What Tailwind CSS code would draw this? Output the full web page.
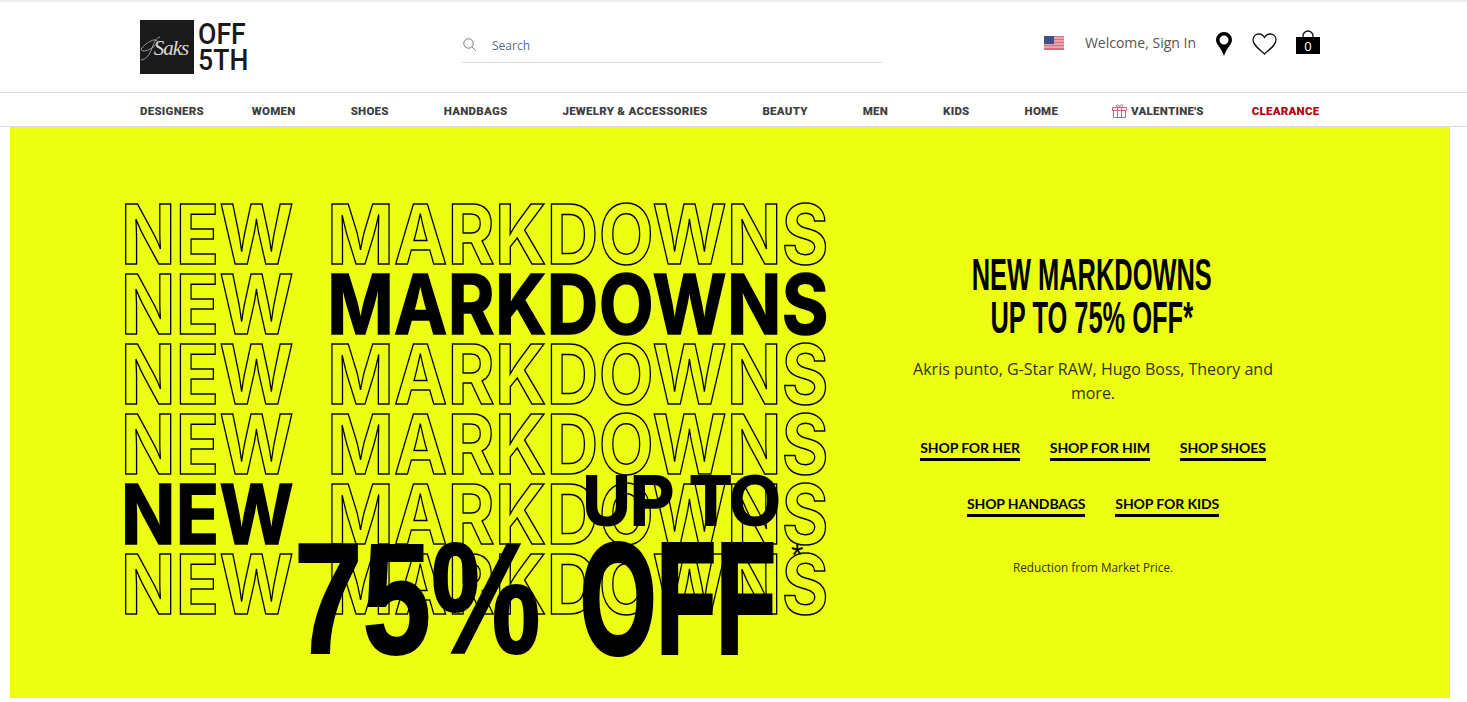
<!DOCTYPE html>
<html lang="en">
<head>
    <meta charset="UTF-8">
    <meta name="viewport" content="width=device-width, initial-scale=1.0">
    <title>Saks OFF 5TH</title>
    <script src="https://cdn.jsdelivr.net/npm/@tailwindcss/browser@4"></script>
</head>
<body class="bg-white text-black font-['Open_Sans',sans-serif] overflow-hidden">

<!-- Header -->
<header class="h-[92px] border-t-2 border-[#eeeeee] flex pl-[140px] pr-[147px]">
    <a class="flex items-start pt-[18px] w-[322px]">
        <span class="relative w-[54px] h-[54px] bg-[#1a1a1a] flex items-center justify-center pl-[8px] pt-[3px] text-[#d8d8d8] font-['Liberation_Serif',serif] italic text-[21px] tracking-[-1px]">
            <svg class="absolute left-0 top-0 w-[54px] h-[54px]" viewBox="0 0 54 54" fill="none" stroke="#cfcfcf" stroke-width=".7"><path d="M1 29c4-5 11-10 15-9 4 2-2 7-6 9-3 2-9 3-9 0zM1 40c5 0 9-6 11-12 2-5 4-10 8-11"/></svg>
            Saks
        </span>
        <span class="ml-[4px] mt-[1px] w-max origin-left scale-x-[.92] font-['Roboto',sans-serif] font-medium text-[#1a1a1a] text-[29px] leading-[26px]">OFF<br>5TH</span>
    </a>
    <div class="w-[420px] h-[45px] mt-[16px] pt-[11px] border-b border-[#dddddd] flex items-center">
        <svg class="w-[13px] h-[13px] ml-[1px] mb-[2px]" viewBox="0 0 13 13" fill="none" stroke="#777" stroke-width="1"><circle cx="5.5" cy="5.5" r="4.7"/><path d="M9 9l3.6 3.6"/></svg>
        <span class="ml-[16px] text-[12px] text-[#55708c]">Search</span>
    </div>
    <div class="flex flex-1 items-start pt-[29px] justify-end">
        <svg class="w-[20px] h-[14px] mt-[5px]" viewBox="0 0 20 14"><rect width="20" height="14" fill="#d9707f"/><path d="M0 2h20M0 5h20M0 8h20M0 11h20" stroke="#f4d6db" stroke-width="1"/><rect width="10" height="8" fill="#3f4f8c"/></svg>
        <span class="ml-[21px] mt-[2px] text-[14px] leading-[20px] text-[#555555]">Welcome, Sign In</span>
        <svg class="w-[18px] h-[24px] ml-[19px] mt-[1px]" viewBox="0 0 18 24"><path fill-rule="evenodd" d="M9 0a8 8 0 0 1 8 8c0 4.500-5.500 8-8 16C6.500 16 1 12.500 1 8a8 8 0 0 1 8-8zm0 3.500a4.500 4.500 0 1 0 0 9 4.500 4.500 0 0 0 0-9z"/></svg>
        <svg class="w-[25px] h-[22px] ml-[19px] mt-[2px]" viewBox="0 0 25 22" fill="none" stroke="#111" stroke-width="1.3"><path d="M12.500 21C7 16 1 12 1 6.800 1 3.500 3.500 1 6.800 1c2.500 0 4.500 1.300 5.700 3.500C13.700 2.300 15.700 1 18.200 1 21.500 1 24 3.500 24 6.800 24 12 18 16 12.500 21z"/></svg>
        <span class="ml-[19px] -mt-[1px] flex flex-col items-center w-[24px]">
            <svg class="w-[14px] h-[7px]" viewBox="0 0 14 7" fill="none" stroke="#111" stroke-width="1.300"><path d="M2 7V6a5 5 0 0 1 10 0v1"/></svg>
            <span class="w-[24px] h-[17px] bg-black text-white text-[13px] leading-[18px] text-center">0</span>
        </span>
    </div>
</header>

<!-- Nav -->
<nav class="h-[35px] pt-[5px] border-y border-[#dddddd] pl-[140px] flex items-center gap-[55px] font-['Roboto',sans-serif] font-black text-[11.5px] tracking-[0.25px] text-[#3f3f3f]">
    <a class="-mr-[7px]">DESIGNERS</a>
    <a>WOMEN</a>
    <a>SHOES</a>
    <a>HANDBAGS</a>
    <a>JEWELRY &amp; ACCESSORIES</a>
    <a>BEAUTY</a>
    <a>MEN</a>
    <a>KIDS</a>
    <a class="-mr-[1px]">HOME</a>
    <a class="flex items-center gap-[4px] -mr-[7px]">
        <svg class="w-[15px] h-[14px] mb-[2px]" viewBox="0 0 15 14" fill="none" stroke="#d0607e" stroke-width="1"><path d="M.5 3.500h14v3H.5zM1.500 6.500h12v7h-12zM5.500 3.500v10M9.500 3.500v10M7.500 3.500C5 3.500 3.500 2 4.500 1s3 .5 3 2.500zm0 0c2.500 0 4-1.500 3-2.500s-3 .5-3 2.500z"/></svg>
        VALENTINE'S
    </a>
    <a class="text-[#b30012]">CLEARANCE</a>
</nav>

<!-- Hero -->
<main class="ml-[10px] mr-[17px] h-[571px] bg-[#ecff13] flex relative">
    <div class="w-[860px] pt-[73px]">
        <div class="ml-[111px] w-max origin-left scale-x-[.87] font-['Inter',sans-serif] font-bold text-[82px] leading-[70px] tracking-[0.5px] [-webkit-text-stroke:1.5px_#000]">
            <div class="flex text-transparent"><span class="w-[237px]">NEW</span><span>MARKDOWNS</span></div>
            <div class="flex"><span class="w-[237px] text-transparent">NEW</span><span>MARKDOWNS</span></div>
            <div class="flex text-transparent"><span class="w-[237px]">NEW</span><span>MARKDOWNS</span></div>
            <div class="flex text-transparent"><span class="w-[237px]">NEW</span><span>MARKDOWNS</span></div>
            <div class="flex"><span class="w-[237px]">NEW</span><span class="text-transparent">MARKDOWNS</span></div>
            <div class="flex text-transparent"><span class="w-[237px]">NEW</span><span>MARKDOWNS</span></div>
        </div>
    </div>

    <div class="absolute left-[573px] top-[334px] w-max origin-left scale-x-[.92] font-['Liberation_Sans',sans-serif] font-bold text-[71px] leading-[80px] [-webkit-text-stroke:2px_#000]">UP TO</div>
    <div class="absolute left-[284px] top-[381px] w-max origin-left scale-x-[.78] font-['Liberation_Sans',sans-serif] font-bold text-[158px] leading-[180px] [-webkit-text-stroke:2px_#000]">75%</div>
    <div class="absolute left-[570px] top-[381px] w-max origin-left scale-x-[.62] font-['Liberation_Sans',sans-serif] font-bold text-[158px] leading-[180px] [-webkit-text-stroke:4px_#000]">OFF</div>
    <div class="absolute left-[781px] top-[410px] font-['Liberation_Sans',sans-serif] text-[32px] leading-[36px]">*</div>

    <div class="w-[440px] ml-[3px] pt-[126px] flex flex-col items-center text-center">
        <h1 class="-ml-[3px] font-['Liberation_Sans',sans-serif] font-bold text-[44px] leading-[43px] scale-x-[.578] w-max">NEW MARKDOWNS<br>UP TO 75% OFF*</h1>
        <p class="mt-[18px] w-[380px] text-[16px] leading-[24px] text-[#333300]">Akris punto, G-Star RAW, Hugo Boss, Theory and more.</p>
        <div class="mt-[33px] flex gap-[30px] font-['Lato',sans-serif] font-bold text-[14px] tracking-[-0.1px] leading-[20px]">
            <a class="border-b-[3px] border-black">SHOP FOR HER</a>
            <a class="border-b-[3px] border-black">SHOP FOR HIM</a>
            <a class="border-b-[3px] border-black">SHOP SHOES</a>
        </div>
        <div class="mt-[33px] flex gap-[30px] font-['Lato',sans-serif] font-bold text-[14px] tracking-[-0.1px] leading-[20px]">
            <a class="border-b-[3px] border-black">SHOP HANDBAGS</a>
            <a class="border-b-[3px] border-black">SHOP FOR KIDS</a>
        </div>
        <p class="mt-[42px] text-[11.75px] leading-[16px] text-[#333300]">Reduction from Market Price.</p>
    </div>
</main>

</body>
</html>
